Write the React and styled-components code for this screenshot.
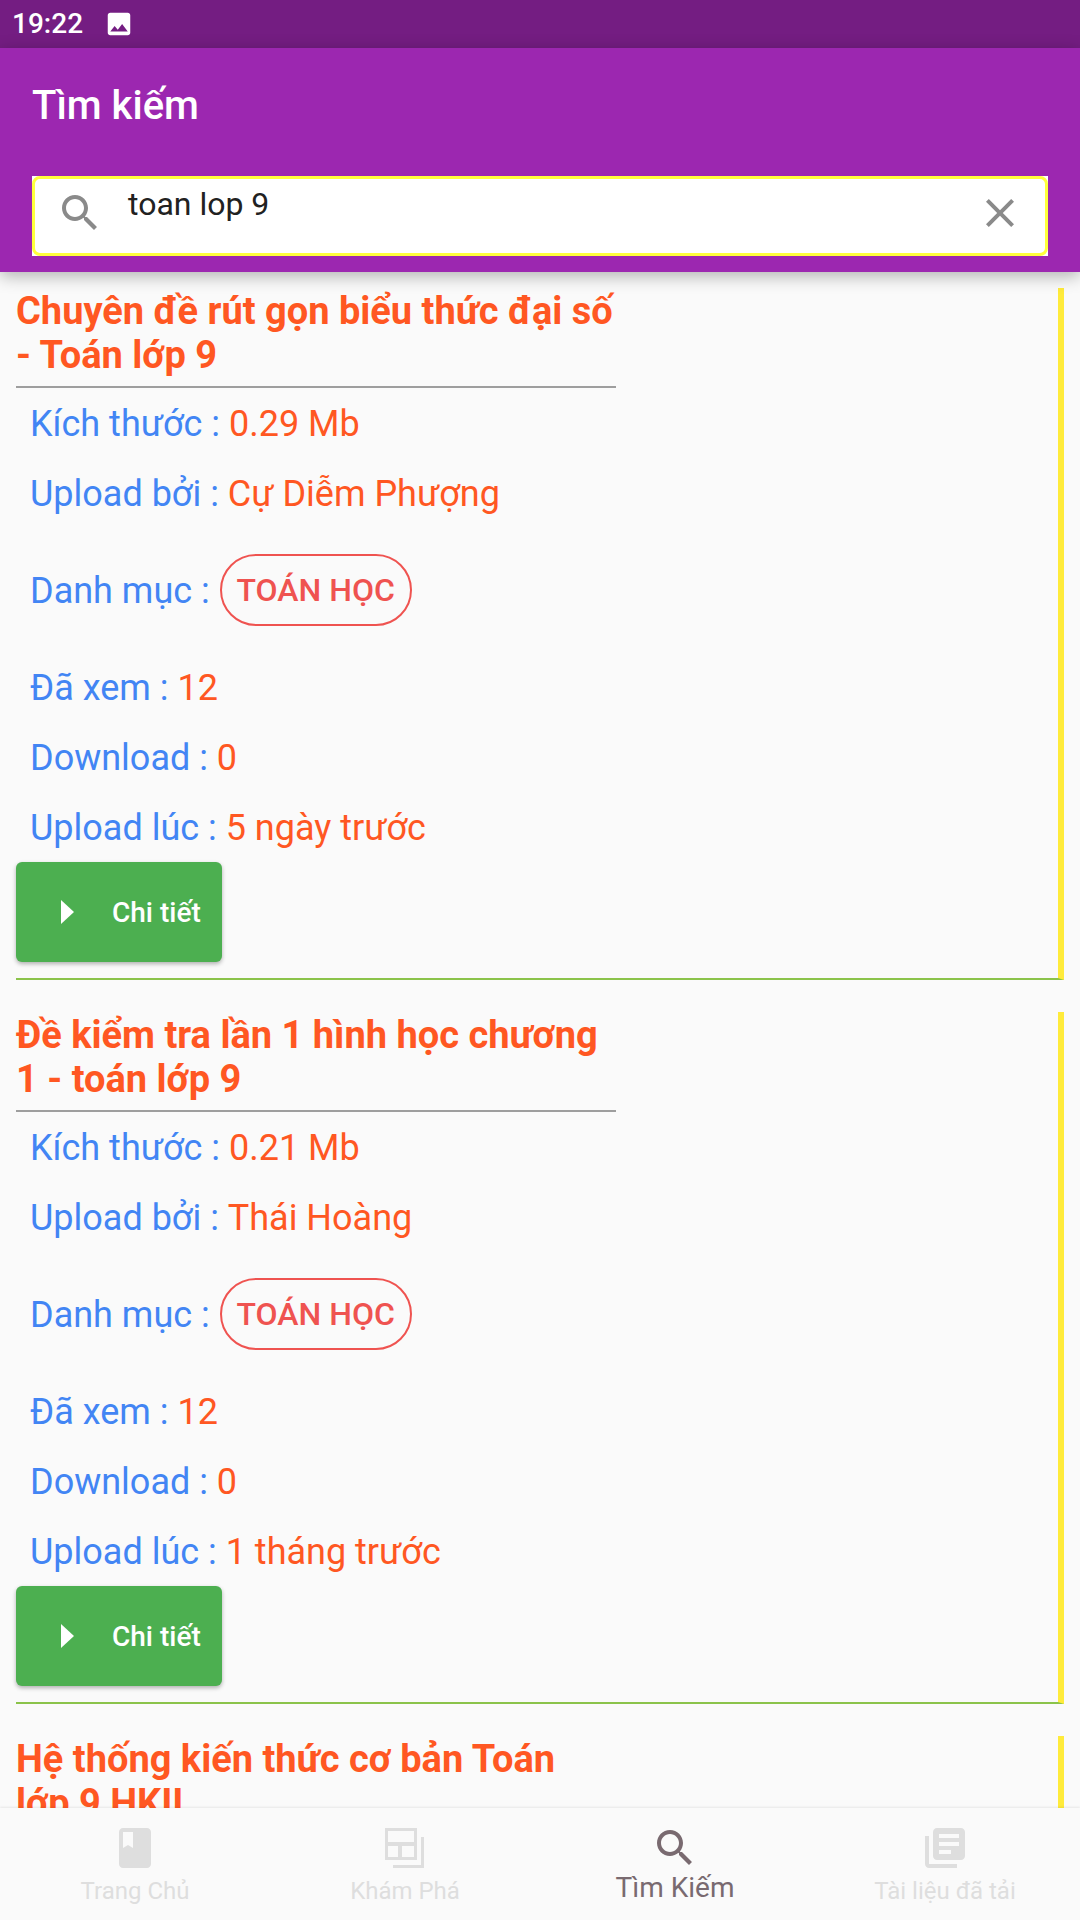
import React from "react";
import styled, { createGlobalStyle } from "styled-components";

const Global = createGlobalStyle`
  html, body { margin: 0; padding: 0; background: #fafafa; }
  * { box-sizing: border-box; }
  body { font-family: Roboto, "Liberation Sans", sans-serif; }
`;

const Page = styled.div`
  width: 1080px; height: 1920px; display: flex; flex-direction: column;
  overflow: hidden; background: #fafafa;
`;
const StatusBar = styled.div`
  height: 48px; flex: none; background: #741d82; color: #fff;
  display: flex; align-items: center; padding: 0 0 0 12px; gap: 21px;
  font-size: 28px; font-weight: 500; line-height: 48px;
`;
const AppBar = styled.header`
  height: 224px; flex: none; background: #9c27b0; color: #fff; position: relative; z-index: 2;
  box-shadow: 0 4px 16px rgba(0,0,0,.3);
  padding: 0 32px 16px; display: flex; flex-direction: column; justify-content: space-between;
`;
const AppTitle = styled.h1`
  margin: 0; height: 112px; padding-top: 4px; font-size: 40px; font-weight: 500; line-height: 107px;
`;
const SearchBox = styled.div`
  height: 80px; background: #fff; position: relative;
  display: flex; justify-content: space-between; align-items: center; padding: 0 24px 6px 24px;
  &::after {
    content: ""; position: absolute; inset: 0; border: 3px solid #ffff3b; border-radius: 8px;
  }
`;
const SearchText = styled.span`
  position: absolute; left: 96px; top: 6px; font-size: 32px; line-height: 44px; color: #212121;
`;
const Main = styled.main`
  flex: 1; min-height: 0; overflow: hidden; padding: 16px 16px 0;
  display: flex; flex-direction: column; gap: 32px;
`;
const Card = styled.article`
  flex: none; height: 692px; border-right: 6px solid #ffeb3b; border-bottom: 2px solid #8bc34a;
`;
const TitleBlock = styled.div`
  width: 600px; height: 100px; border-bottom: 2px solid #9e9e9e; padding-top: 1px;
`;
const Title = styled.h2`
  margin: 0; font-size: 38px; font-weight: 700; line-height: 44px; color: #ff5722;
`;
const Row = styled.div`
  height: ${p => p.$h || 70}px; padding: 2px 0 0 14px; display: flex; align-items: center;
  font-size: 36px; color: #4285f4; white-space: pre;
`;
const Value = styled.span` color: #ff5722; `;
const Chip = styled.span`
  height: 72px; width: 192px; margin: -2px 0 0 1px; border: 2px solid #ef5350; border-radius: 36px;
  display: flex; align-items: center; justify-content: center;
  color: #ef5350; font-size: 32px; font-weight: 500;
`;
const DetailButton = styled.button`
  width: 206px; height: 100px; margin-top: 0; padding: 0 0 0 36px; border: 0; border-radius: 6px;
  background: #4caf50; color: #fff; display: flex; align-items: center;
  box-shadow: 0 2px 4px rgba(0,0,0,.3);
  font-family: inherit; font-size: 28px; font-weight: 500;
`;
const Arrow = styled.span`
  width: 0; height: 0; border-left: 13px solid #fff; border-top: 12px solid transparent;
  border-bottom: 12px solid transparent; margin: 0 38px 0 9px;
`;
const Nav = styled.nav`
  height: 112px; flex: none; background: #fafafa; display: grid; grid-template-columns: repeat(4, 1fr);
  box-shadow: 0 -1px 2px rgba(0,0,0,.08); position: relative; z-index: 2;
`;
const NavItem = styled.div`
  display: flex; flex-direction: column; align-items: center; padding-top: 16px;
  color: ${p => p.$active ? "#796a70" : "#dedede"};
  font-size: ${p => p.$active ? 28 : 24}px; line-height: 32px;
  span { margin-top: ${p => p.$active ? 0 : 3}px; }
`;
const Icon = ({ d, size = 48, color = "currentColor" }) => (
  <svg width={size} height={size} viewBox="0 0 24 24" fill={color} style={{ display: "block", flex: "none" }}><path d={d} /></svg>
);
const P = {
  image: "M21 19V5c0-1.1-.9-2-2-2H5c-1.1 0-2 .9-2 2v14c0 1.1.9 2 2 2h14c1.1 0 2-.9 2-2zM8.5 13.5l2.5 3.01L14.5 12l4.5 6H5l3.5-4.5z",
  search: "M15.5 14h-.79l-.28-.27C15.41 12.59 16 11.11 16 9.5 16 5.91 13.09 3 9.5 3S3 5.91 3 9.5 5.91 16 9.5 16c1.61 0 3.09-.59 4.23-1.57l.27.28v.79l5 4.99L20.49 19l-4.99-5zm-6 0C7.01 14 5 11.99 5 9.5S7.01 5 9.5 5 14 7.01 14 9.5 11.99 14 9.5 14z",
  close: "M19 6.41L17.59 5 12 10.59 6.41 5 5 6.41 10.59 12 5 17.59 6.41 19 12 13.41 17.59 19 19 17.59 13.41 12z",
  book: "M18 2H6c-1.1 0-2 .9-2 2v16c0 1.1.9 2 2 2h12c1.1 0 2-.9 2-2V4c0-1.1-.9-2-2-2zM6 4h5v8l-2.5-1.5L6 12V4z",
  explore: "M2 2h16v16H2V2zm1.5 1.5v5.5h13V3.5h-13zm0 7.5v5.5h5v-5.5h-5zm7 0v5.5h6v-5.5h-6zM20 6.5h1.5V22H6v-1.5h14V6.5z",
  library: "M4 6H2v14c0 1.1.9 2 2 2h14v-2H4V6zm16-4H8c-1.1 0-2 .9-2 2v12c0 1.1.9 2 2 2h12c1.1 0 2-.9 2-2V4c0-1.1-.9-2-2-2zm-1 9H9V9h10v2zm-4 4H9v-2h6v2zm4-8H9V5h10v2z",
};
const docs = [
  { t: "Chuyên đề rút gọn biểu thức đại số - Toán lớp 9", s: "0.29 Mb", u: "Cự Diễm Phượng", a: "5 ngày trước" },
  { t: "Đề kiểm tra lần 1 hình học chương 1 - toán lớp 9", s: "0.21 Mb", u: "Thái Hoàng", a: "1 tháng trước" },
];
const DocCard = ({ d }) => (
  <Card>
    <TitleBlock><Title>{d.t}</Title></TitleBlock>
    <Row>Kích thước : <Value>{d.s}</Value></Row>
    <Row>Upload bởi : <Value>{d.u}</Value></Row>
    <Row $h={124}>Danh mục : <Chip>TOÁN HỌC</Chip></Row>
    <Row>Đã xem : <Value>12</Value></Row>
    <Row>Download : <Value>0</Value></Row>
    <Row>Upload lúc : <Value>{d.a}</Value></Row>
    <DetailButton><Arrow />Chi tiết</DetailButton>
  </Card>
);
export default function App() {
  return (
    <Page>
      <Global />
      <StatusBar>19:22<Icon d={P.image} size={30} color="#fff" /></StatusBar>
      <AppBar>
        <AppTitle>Tìm kiếm</AppTitle>
        <SearchBox>
          <Icon d={P.search} size={48} color="#8a8a8a" />
          <SearchText>toan lop 9</SearchText>
          <Icon d={P.close} size={48} color="#8a8a8a" />
        </SearchBox>
      </AppBar>
      <Main>
        {docs.map(d => <DocCard key={d.t} d={d} />)}
        <Card>
          <TitleBlock><Title>Hệ thống kiến thức cơ bản Toán lớp 9 HKII</Title></TitleBlock>
        </Card>
      </Main>
      <Nav>
        <NavItem><Icon d={P.book} /><span>Trang Chủ</span></NavItem>
        <NavItem><Icon d={P.explore} /><span>Khám Phá</span></NavItem>
        <NavItem $active><Icon d={P.search} /><span>Tìm Kiếm</span></NavItem>
        <NavItem><Icon d={P.library} /><span>Tài liệu đã tải</span></NavItem>
      </Nav>
    </Page>
  );
}
